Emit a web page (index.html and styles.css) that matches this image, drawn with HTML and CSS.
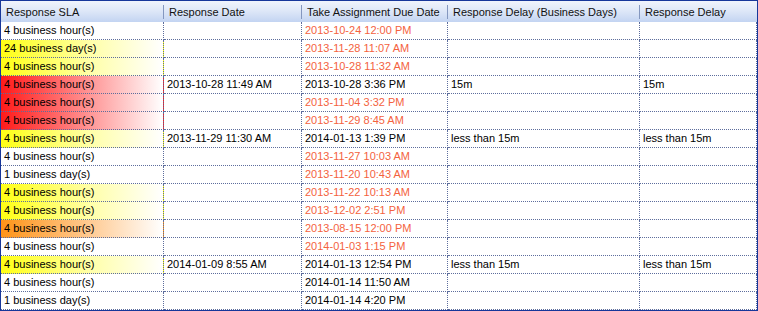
FILE: index.html
```html
<!DOCTYPE html>
<html>
<head>
<meta charset="utf-8">
<link rel="stylesheet" href="styles.css">
</head>
<body>
<div class="grid">
  <div class="th">Response SLA</div>
  <div class="th">Response Date</div>
  <div class="th">Take Assignment Due Date</div>
  <div class="th">Response Delay (Business Days)</div>
  <div class="th last">Response Delay</div>

  <div class="td">4 business hour(s)</div><div class="td"></div><div class="td due">2013-10-24 12:00 PM</div><div class="td"></div><div class="td"></div>
  <div class="td yellow">24 business day(s)</div><div class="td"></div><div class="td due">2013-11-28 11:07 AM</div><div class="td"></div><div class="td"></div>
  <div class="td yellow">4 business hour(s)</div><div class="td"></div><div class="td due">2013-10-28 11:32 AM</div><div class="td"></div><div class="td"></div>
  <div class="td red">4 business hour(s)</div><div class="td">2013-10-28 11:49 AM</div><div class="td">2013-10-28 3:36 PM</div><div class="td">15m</div><div class="td">15m</div>
  <div class="td red">4 business hour(s)</div><div class="td"></div><div class="td due">2013-11-04 3:32 PM</div><div class="td"></div><div class="td"></div>
  <div class="td red">4 business hour(s)</div><div class="td"></div><div class="td due">2013-11-29 8:45 AM</div><div class="td"></div><div class="td"></div>
  <div class="td yellow">4 business hour(s)</div><div class="td">2013-11-29 11:30 AM</div><div class="td">2014-01-13 1:39 PM</div><div class="td">less than 15m</div><div class="td">less than 15m</div>
  <div class="td">4 business hour(s)</div><div class="td"></div><div class="td due">2013-11-27 10:03 AM</div><div class="td"></div><div class="td"></div>
  <div class="td">1 business day(s)</div><div class="td"></div><div class="td due">2013-11-20 10:43 AM</div><div class="td"></div><div class="td"></div>
  <div class="td yellow">4 business hour(s)</div><div class="td"></div><div class="td due">2013-11-22 10:13 AM</div><div class="td"></div><div class="td"></div>
  <div class="td yellow">4 business hour(s)</div><div class="td"></div><div class="td due">2013-12-02 2:51 PM</div><div class="td"></div><div class="td"></div>
  <div class="td orange">4 business hour(s)</div><div class="td"></div><div class="td due">2013-08-15 12:00 PM</div><div class="td"></div><div class="td"></div>
  <div class="td">4 business hour(s)</div><div class="td"></div><div class="td due">2014-01-03 1:15 PM</div><div class="td"></div><div class="td"></div>
  <div class="td yellow">4 business hour(s)</div><div class="td">2014-01-09 8:55 AM</div><div class="td">2014-01-13 12:54 PM</div><div class="td">less than 15m</div><div class="td">less than 15m</div>
  <div class="td">4 business hour(s)</div><div class="td"></div><div class="td">2014-01-14 11:50 AM</div><div class="td"></div><div class="td"></div>
  <div class="td">1 business day(s)</div><div class="td"></div><div class="td">2014-01-14 4:20 PM</div><div class="td"></div><div class="td"></div>
</div>
</body>
</html>
```

FILE: styles.css
```css
* { box-sizing: border-box; }
html, body { margin: 0; padding: 0; background: #ffffff; }
body {
  font-family: "Liberation Sans", Arial, sans-serif;
  font-size: 11px;
  color: #000000;
}
.grid {
  width: 758px;
  height: 311px;
  border: 1px solid #17379a;
  display: grid;
  grid-template-columns: 163px 138px 146px 192px 117px;
  grid-template-rows: 21px;
  grid-auto-rows: 18px;
  overflow: hidden;
}
.th {
  position: relative;
  background: linear-gradient(to bottom, #f0f4fc 0%, #dfe8f8 45%, #c3d4f2 100%);
  line-height: 21px;
  padding: 1px 0 0 5px;
  white-space: nowrap;
  overflow: hidden;
  color: #111111;
}
.th:not(.last)::after {
  content: "";
  position: absolute;
  right: 0;
  top: 4px;
  bottom: 3px;
  width: 1px;
  background: #8497bf;
  box-shadow: 1px 0 0 #ffffff;
}
.td {
  line-height: 17px;
  padding: 0 3px;
  white-space: nowrap;
  overflow: hidden;
  border-right: 1px dotted #5d6d9c;
  border-bottom: 1px dotted #5d6d9c;
}
.due { color: #f4623e; }
.yellow { background: linear-gradient(to right, #ffff14 0%, #ffffa8 55%, #ffffff 100%); }
.red { background: linear-gradient(to right, #ff1a1a 0%, #ff8a8a 50%, #ffffff 100%); }
.orange { background: linear-gradient(to right, #ff9418 0%, #ffc587 50%, #ffffff 100%); }
```
